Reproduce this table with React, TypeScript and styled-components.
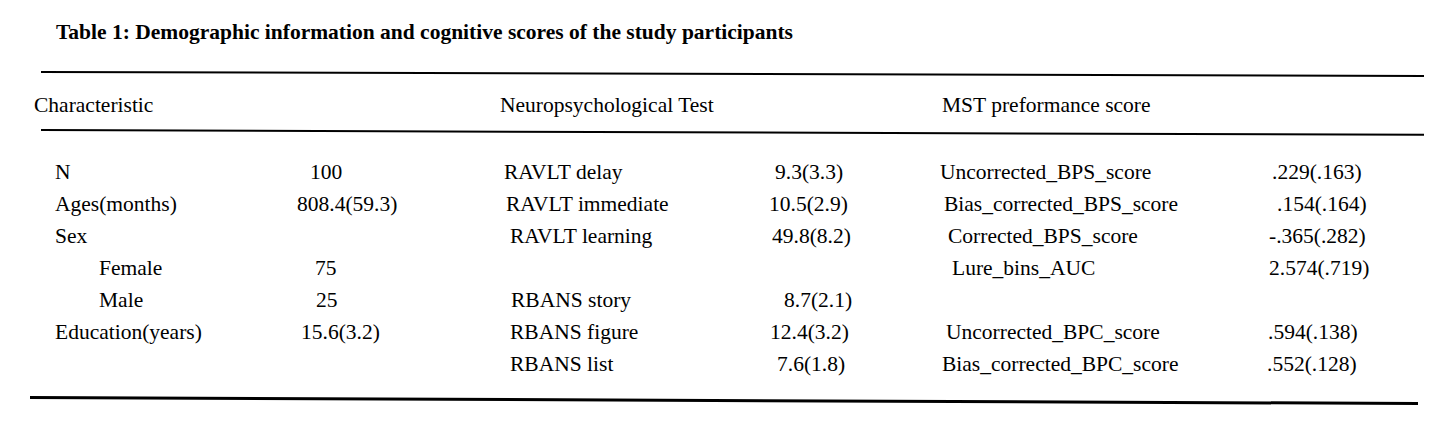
import React from "react";
import styled, { createGlobalStyle } from "styled-components";

const GlobalStyle = createGlobalStyle`
  html, body {
    margin: 0;
    padding: 0;
    background: #ffffff;
  }
  body {
    font-family: "Liberation Serif", "Times New Roman", serif;
    color: #000000;
  }
`;

type Cell = [string, number];

const rows: Cell[][] = [
  [["N", 55], ["100", 13], ["RAVLT delay", 0], ["9.3(3.3)", 6], ["Uncorrected_BPS_score", 0], [".229(.163)", 5]],
  [["Ages(months)", 55], ["808.4(59.3)", 0], ["RAVLT immediate", 2], ["10.5(2.9)", 0], ["Bias_corrected_BPS_score", 4], [".154(.164)", 10]],
  [["Sex", 55], ["", 0], ["RAVLT learning", 6], ["49.8(8.2)", 3], ["Corrected_BPS_score", 8], ["-.365(.282)", 2]],
  [["Female", 99], ["75", 18], ["", 0], ["", 0], ["Lure_bins_AUC", 12], ["2.574(.719)", 2]],
  [["Male", 99], ["25", 19], ["RBANS story", 7], ["8.7(2.1)", 15], ["", 0], ["", 0]],
  [["Education(years)", 55], ["15.6(3.2)", 4], ["RBANS figure", 6], ["12.4(3.2)", 1], ["Uncorrected_BPC_score", 6], [".594(.138)", 1]],
  [["", 0], ["", 0], ["RBANS list", 6], ["7.6(1.8)", 8], ["Bias_corrected_BPC_score", 2], [".552(.128)", 0]],
];

const headers: Cell[] = [
  ["Characteristic", 34],
  ["Neuropsychological Test", 0],
  ["MST preformance score", 0],
];

const App = () => {
  return (
    <>
      <GlobalStyle />
      <Page>
        <Title>Table 1: Demographic information and cognitive scores of the study participants</Title>
        <Rule $left={41} $width={1383} $tilt={0.166} $top={23} />
        <HeaderRow>
          {headers.map(([text, x]) => (
            <HeadCell key={text} $x={x}>
              {text}
            </HeadCell>
          ))}
        </HeaderRow>
        <Rule $left={41} $width={1383} $tilt={0.2} $top={8} />
        <Body>
          {rows.map((row, i) => (
            <Row key={i}>
              {row.map(([text, x], j) => (
                <DataCell key={j} $x={x}>
                  {text}
                </DataCell>
              ))}
            </Row>
          ))}
        </Body>
        <Rule $left={30} $width={1388} $tilt={0.248} $top={16} $thick={3} />
      </Page>
    </>
  );
};

export default App;

const Page = styled.div`
  width: 1451px;
  height: 433px;
  overflow: hidden;
  display: flex;
  flex-direction: column;
  font-size: 21.5px;
  line-height: 32px;
`;

const Title = styled.div`
  margin-top: 16px;
  padding-left: 56px;
  font-weight: bold;
  white-space: nowrap;
`;

const Rule = styled.div<{ $left: number; $width: number; $tilt: number; $top: number; $thick?: number }>`
  margin-top: ${(p) => p.$top}px;
  margin-left: ${(p) => p.$left}px;
  width: ${(p) => p.$width}px;
  height: ${(p) => p.$thick || 2}px;
  background: #000000;
  transform-origin: left center;
  transform: rotate(${(p) => p.$tilt}deg);
  flex-shrink: 0;
`;

const HeaderRow = styled.div`
  margin-top: 16px;
  display: grid;
  grid-template-columns: 500px 442px 1fr;
  height: 32px;
`;

const HeadCell = styled.div<{ $x: number }>`
  padding-left: ${(p) => p.$x}px;
  white-space: pre;
`;

const Body = styled.div`
  margin-top: 25px;
  display: flex;
  flex-direction: column;
`;

const Row = styled.div`
  display: grid;
  grid-template-columns: 297px 207px 265px 171px 327px 1fr;
  height: 32px;
`;

const DataCell = styled.div<{ $x: number }>`
  padding-left: ${(p) => p.$x}px;
  white-space: pre;
`;
